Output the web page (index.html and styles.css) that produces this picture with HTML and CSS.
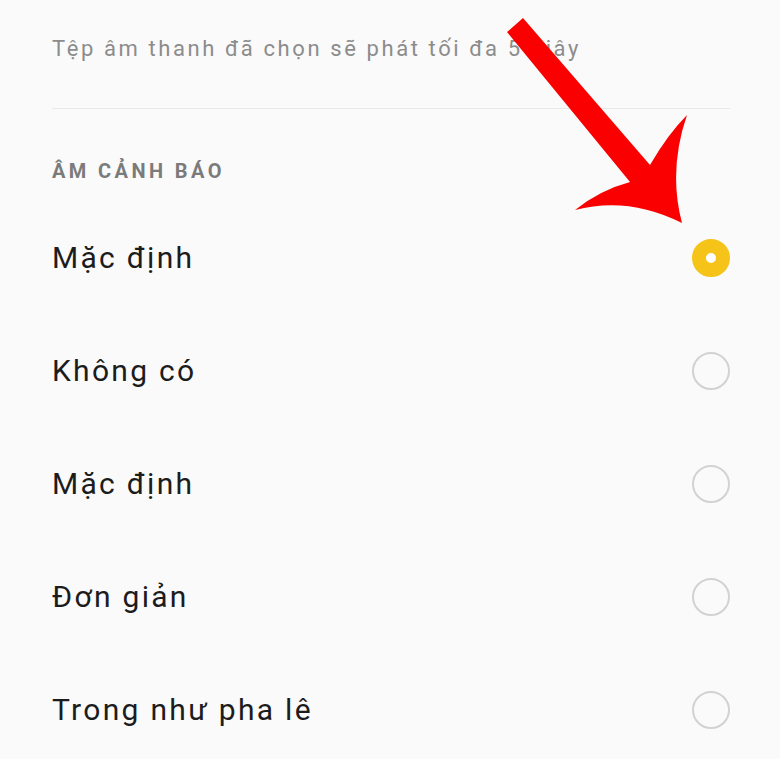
FILE: index.html
```html
<!DOCTYPE html>
<html lang="vi">
<head>
    <meta charset="UTF-8">
    <meta name="viewport" content="width=device-width, initial-scale=1.0">
    <title>Âm cảnh báo</title>
    <link rel="stylesheet" href="styles.css">
</head>
<body>
    <div class="page">
        <p class="note">Tệp âm thanh đã chọn sẽ phát tối đa 5 giây</p>
        <div class="divider"></div>

        <h2 class="section-title">ÂM CẢNH BÁO</h2>

        <ul class="sound-list">
            <li class="sound-row">
                <span class="sound-name">Mặc định</span>
                <span class="radio checked"></span>
            </li>
            <li class="sound-row">
                <span class="sound-name">Không có</span>
                <span class="radio"></span>
            </li>
            <li class="sound-row">
                <span class="sound-name">Mặc định</span>
                <span class="radio"></span>
            </li>
            <li class="sound-row">
                <span class="sound-name">Đơn giản</span>
                <span class="radio"></span>
            </li>
            <li class="sound-row">
                <span class="sound-name">Trong như pha lê</span>
                <span class="radio"></span>
            </li>
        </ul>
    </div>

    <!-- red pointer drawn over the screenshot -->
    <svg class="pointer" width="780" height="759" viewBox="0 0 780 759">
        <path d="M507 32 L523 18 L650 165 Q668 134 687 115 Q668 170 682 223 Q628 196 575 210 Q600 190 630 182 Z" fill="#fb0000"/>
    </svg>
</body>
</html>
```

FILE: styles.css
```css
body {
    margin: 0;
    background-color: #fafafa;
    font-family: Roboto, "Noto Sans", sans-serif;
}
.page {
    padding: 0 50px 0 52px;
}
.note {
    margin: 0;
    padding-top: 34px;
    height: 74px;
    font-size: 22px;
    line-height: 30px;
    letter-spacing: 2.6px;
    color: #8c8c8c;
}
.divider {
    border-top: 1px solid #e9e9e9;
}
.section-title {
    margin: 50px 0 0;
    font-size: 20px;
    line-height: 24px;
    font-weight: bold;
    letter-spacing: 3.4px;
    color: #7b7b7b;
}
.sound-list {
    list-style: none;
    margin: 18px 0 0;
    padding: 0;
}
.sound-row {
    height: 113px;
    display: flex;
    align-items: center;
    justify-content: space-between;
}
.sound-name {
    font-size: 30px;
    letter-spacing: 2.3px;
    color: #1c1c1c;
}
.radio {
    width: 34px;
    height: 34px;
    border: 2px solid #d2d2d2;
    border-radius: 50%;
}
.radio.checked {
    width: 10px;
    height: 10px;
    border: 14px solid #f6c419;
    background-color: #fff;
}
.pointer {
    position: absolute;
    top: 0;
    left: 0;
}
```
